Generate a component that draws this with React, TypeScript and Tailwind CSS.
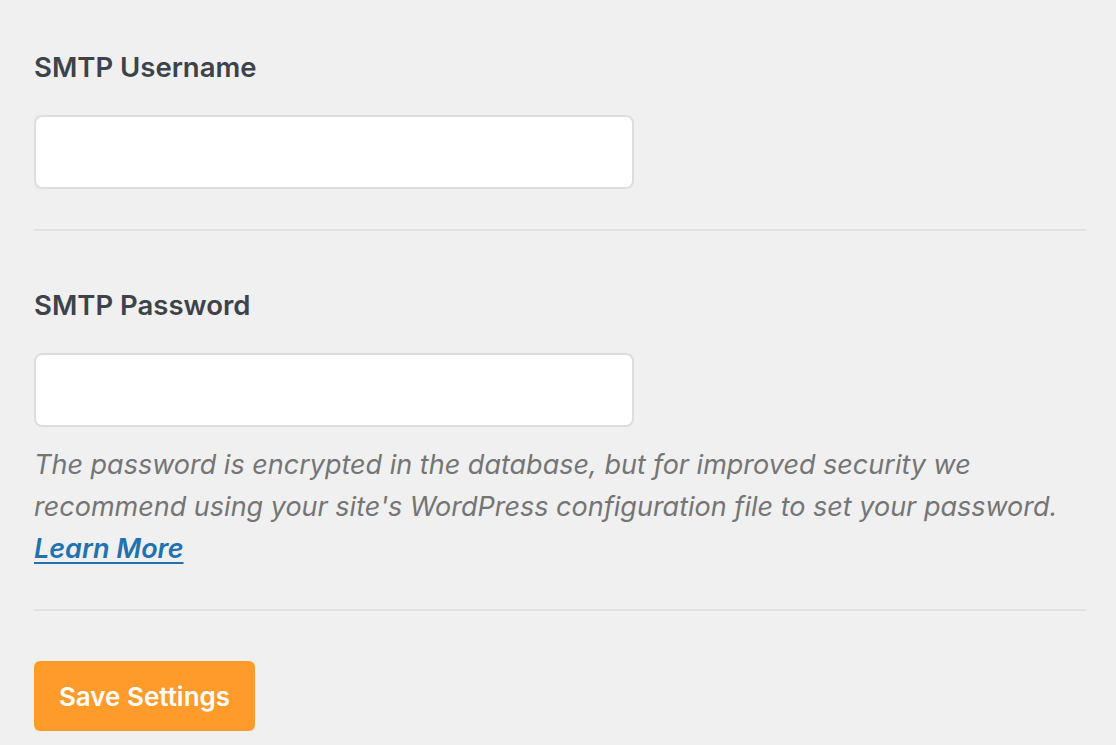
export default function App() {
  return (
    <div
      className="min-h-[745px] w-full bg-[#f0f0f0] pl-[34px] pr-[30px] pt-[50px]"
      style={{ fontFamily: "Inter, 'Noto Sans', sans-serif" }}
    >
      {/* Username */}
      <label className="block text-[27.5px] leading-[34px] font-semibold text-[#3c434a]">SMTP Username</label>
      <input
        type="text"
        className="mt-[31px] block h-[74px] w-[600px] rounded-[8px] border-2 border-[#dddddd] bg-white px-4 text-[24px] outline-none"
      />

      <div className="mt-[40px] h-[2px] w-[1052px] bg-[#e2e2e2]" />

      {/* Password */}
      <label className="mt-[57px] block text-[27.5px] leading-[34px] font-semibold text-[#3c434a]">SMTP Password</label>
      <input
        type="password"
        className="mt-[31px] block h-[74px] w-[600px] rounded-[8px] border-2 border-[#dddddd] bg-white px-4 text-[24px] outline-none"
      />
      <p className="mt-[17px] whitespace-nowrap text-[27px] leading-[42px] italic text-[#757575]">
        The password is encrypted in the database, but for improved security we
        <br />
        recommend using your site's WordPress configuration file to set your password.
        <br />
        <a href="#" className="font-semibold text-[#2271b1] underline underline-offset-[4px]">
          Learn More
        </a>
      </p>

      <div className="mt-[39px] h-[2px] w-[1052px] bg-[#e2e2e2]" />

      <button className="mt-[50px] flex h-[70px] w-[221px] items-center justify-center rounded-[6px] bg-[#ff9b2b] text-[26px] font-semibold text-white">
        Save Settings
      </button>
    </div>
  )
}
